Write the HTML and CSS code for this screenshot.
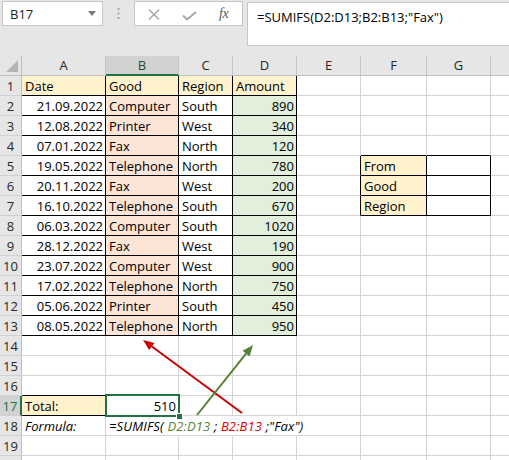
FILE: index.html
```html
<!DOCTYPE html>
<html>
<head>
<meta charset="utf-8">
<link rel="stylesheet" href="styles.css">
</head>
<body>
<div class="app">
  <div class="toolbar">
    <div class="namebox">
      <span class="nb-text">B17</span>
      <svg class="nb-arrow" width="8" height="5" viewBox="0 0 8 5"><polygon points="0,0 8,0 4,5" fill="#7a7a7a"/></svg>
    </div>
    <div class="sep">
      <svg width="3" height="12" viewBox="0 0 3 12"><rect x="0.5" y="0" width="2" height="2" fill="#a8a8a8"/><rect x="0.5" y="4.5" width="2" height="2" fill="#a8a8a8"/><rect x="0.5" y="9" width="2" height="2" fill="#a8a8a8"/></svg>
    </div>
    <div class="btns">
      <svg class="btn-x" width="12" height="11" viewBox="0 0 12 11"><path d="M1 0.5 L11 10.5 M11 0.5 L1 10.5" stroke="#a6a6a6" stroke-width="1.4" fill="none"/></svg>
      <svg class="btn-ok" width="15" height="10" viewBox="0 0 15 10"><path d="M1 4.5 L5 8.5 L14 1" stroke="#a6a6a6" stroke-width="2" fill="none"/></svg>
      <span class="fx">fx</span>
    </div>
    <div class="fbar">=SUMIFS(D2:D13;B2:B13;"Fax")</div>
  </div>

  <div class="sheet">
    <div class="corner"><svg width="12" height="12" viewBox="0 0 12 12"><polygon points="12,0 12,12 0,12" fill="#b5b5b5"/></svg></div>
    <div class="h">A</div><div class="h hs">B</div><div class="h">C</div><div class="h">D</div><div class="h">E</div><div class="h">F</div><div class="h">G</div><div class="h"></div>

    <div class="rh">1</div><div class="c b y">Date</div><div class="c b y">Good</div><div class="c b y">Region</div><div class="c b y">Amount</div><div class="c"></div><div class="c"></div><div class="c"></div><div class="c"></div>
    <div class="rh">2</div><div class="c b n">21.09.2022</div><div class="c b o">Computer</div><div class="c b">South</div><div class="c b g n">890</div><div class="c"></div><div class="c"></div><div class="c"></div><div class="c"></div>
    <div class="rh">3</div><div class="c b n">12.08.2022</div><div class="c b o">Printer</div><div class="c b">West</div><div class="c b g n">340</div><div class="c"></div><div class="c"></div><div class="c"></div><div class="c"></div>
    <div class="rh">4</div><div class="c b n">07.01.2022</div><div class="c b o">Fax</div><div class="c b">North</div><div class="c b g n">120</div><div class="c"></div><div class="c bb"></div><div class="c bb"></div><div class="c"></div>
    <div class="rh">5</div><div class="c b n">19.05.2022</div><div class="c b o">Telephone</div><div class="c b">North</div><div class="c b g n">780</div><div class="c br"></div><div class="c b y">From</div><div class="c b"></div><div class="c"></div>
    <div class="rh">6</div><div class="c b n">20.11.2022</div><div class="c b o">Fax</div><div class="c b">West</div><div class="c b g n">200</div><div class="c br"></div><div class="c b y">Good</div><div class="c b"></div><div class="c"></div>
    <div class="rh">7</div><div class="c b n">16.10.2022</div><div class="c b o">Telephone</div><div class="c b">South</div><div class="c b g n">670</div><div class="c br"></div><div class="c b y">Region</div><div class="c b"></div><div class="c"></div>
    <div class="rh">8</div><div class="c b n">06.03.2022</div><div class="c b o">Computer</div><div class="c b">South</div><div class="c b g n">1020</div><div class="c"></div><div class="c"></div><div class="c"></div><div class="c"></div>
    <div class="rh">9</div><div class="c b n">28.12.2022</div><div class="c b o">Fax</div><div class="c b">West</div><div class="c b g n">190</div><div class="c"></div><div class="c"></div><div class="c"></div><div class="c"></div>
    <div class="rh">10</div><div class="c b n">23.07.2022</div><div class="c b o">Computer</div><div class="c b">West</div><div class="c b g n">900</div><div class="c"></div><div class="c"></div><div class="c"></div><div class="c"></div>
    <div class="rh">11</div><div class="c b n">17.02.2022</div><div class="c b o">Telephone</div><div class="c b">North</div><div class="c b g n">750</div><div class="c"></div><div class="c"></div><div class="c"></div><div class="c"></div>
    <div class="rh">12</div><div class="c b n">05.06.2022</div><div class="c b o">Printer</div><div class="c b">South</div><div class="c b g n">450</div><div class="c"></div><div class="c"></div><div class="c"></div><div class="c"></div>
    <div class="rh">13</div><div class="c b n">08.05.2022</div><div class="c b o">Telephone</div><div class="c b">North</div><div class="c b g n">950</div><div class="c"></div><div class="c"></div><div class="c"></div><div class="c"></div>
    <div class="rh">14</div><div class="c"></div><div class="c"></div><div class="c"></div><div class="c"></div><div class="c"></div><div class="c"></div><div class="c"></div><div class="c"></div>
    <div class="rh">15</div><div class="c"></div><div class="c"></div><div class="c"></div><div class="c"></div><div class="c"></div><div class="c"></div><div class="c"></div><div class="c"></div>
    <div class="rh">16</div><div class="c bb"></div><div class="c bb"></div><div class="c"></div><div class="c"></div><div class="c"></div><div class="c"></div><div class="c"></div><div class="c"></div>
    <div class="rh rhs">17</div><div class="c b y">Total:</div><div class="c b n sel">510</div><div class="c"></div><div class="c"></div><div class="c"></div><div class="c"></div><div class="c"></div><div class="c"></div>
    <div class="rh">18</div><div class="c i">Formula:</div><div class="c i nr ov">=SUMIFS( <span class="ref-g">D2:D13</span> ; <span class="ref-r">B2:B13</span> ;"Fax")</div><div class="c nr"></div><div class="c nr"></div><div class="c"></div><div class="c"></div><div class="c"></div><div class="c"></div>
    <div class="rh">19</div><div class="c"></div><div class="c"></div><div class="c"></div><div class="c"></div><div class="c"></div><div class="c"></div><div class="c"></div><div class="c"></div>
    <div class="rh"></div><div class="c"></div><div class="c"></div><div class="c"></div><div class="c"></div><div class="c"></div><div class="c"></div><div class="c"></div><div class="c"></div>
  </div>

  <svg class="arrows" width="509" height="460" viewBox="0 0 509 460">
    <line x1="242" y1="413" x2="151.9" y2="346.5" stroke="#c80000" stroke-width="2"/>
    <polygon points="143,340 154.5,342.9 149.2,350.1" fill="#c80000"/>
    <line x1="197" y1="415" x2="246.1" y2="353.6" stroke="#548235" stroke-width="2"/>
    <polygon points="253,345 249.6,356.4 242.6,350.8" fill="#548235"/>
  </svg>
</div>
</body>
</html>
```

FILE: styles.css
```css
html, body {
  margin: 0;
  padding: 0;
  background: #ffffff;
}
body {
  width: 509px;
  height: 460px;
  overflow: hidden;
  font-family: "Open Sans", "Liberation Sans", sans-serif;
  font-size: 13px;
  color: #000;
}
.app {
  position: relative;
  width: 509px;
  height: 460px;
  overflow: hidden;
}

/* ---------- toolbar ---------- */
.toolbar {
  height: 56px;
  box-sizing: border-box;
  background: #e6e6e6;
  display: flex;
  align-items: flex-start;
  padding: 1px 0 0 2px;
}
.namebox {
  width: 101px;
  height: 25px;
  box-sizing: border-box;
  background: #fff;
  border: 1px solid #c6c6c6;
  display: flex;
  align-items: center;
  justify-content: space-between;
  padding: 0 6px 0 7px;
}
.nb-text {
  font-size: 13px;
  color: #222;
}
.nb-arrow {
  display: block;
}
.sep {
  width: 31px;
  height: 25px;
  display: flex;
  align-items: center;
  justify-content: center;
}
.sep svg { display: block; margin-top: 1px; }
.btns {
  width: 109px;
  height: 25px;
  box-sizing: border-box;
  background: #fff;
  border: 1px solid #c6c6c6;
  display: flex;
  align-items: center;
  padding: 0 0 0 13px;
}
.btns svg { display: block; }
.btn-x { margin-right: 22px; margin-top: 2px; }
.btn-ok { margin-right: 22px; margin-top: 4px; }
.fx {
  font-family: "Liberation Serif", serif;
  font-style: italic;
  font-size: 14px;
  color: #555;
  letter-spacing: -0.5px;
}
.fbar {
  margin-left: 4px;
  margin-top: 1px;
  flex: 1;
  height: 44px;
  box-sizing: border-box;
  background: #fff;
  border: 1px solid #c6c6c6;
  border-right: none;
  padding: 5px 0 0 9px;
  font-size: 13px;
  line-height: 18px;
  color: #000;
  white-space: nowrap;
}

/* ---------- sheet ---------- */
.sheet {
  display: grid;
  grid-template-columns: 22px 84px 73px 54px 64px 64px 66px 64px 40px;
  grid-auto-rows: 20px;
}
.sheet > div {
  box-sizing: border-box;
  white-space: nowrap;
}
.corner {
  background: #e6e6e6;
  border-right: 1px solid #bfbfbf;
  border-bottom: 1px solid #bfbfbf;
  display: flex;
  align-items: flex-end;
  justify-content: flex-end;
  padding: 0 3px 3px 0;
}
.corner svg { display: block; }
.h {
  background: #e6e6e6;
  border-right: 1px solid #c4c4c4;
  border-bottom: 1px solid #bfbfbf;
  text-align: center;
  line-height: 19px;
  color: #262626;
}
.hs {
  background: #d2d2d2;
  border-bottom: 2px solid #217346;
  color: #1d4f33;
}
.rh {
  background: #e6e6e6;
  border-right: 1px solid #bfbfbf;
  border-bottom: 1px solid #d0d0d0;
  text-align: center;
  line-height: 20px;
  color: #262626;
}
.rhs {
  background: #d2d2d2;
  border-right: 2px solid #217346;
  color: #217346;
}
.c {
  border-right: 1px solid #d4d4d4;
  border-bottom: 1px solid #d4d4d4;
  padding: 0 3px;
  line-height: 20px;
  overflow: visible;
}
.b {
  border-right-color: #000;
  border-bottom-color: #000;
}
.bb { border-bottom-color: #000; }
.br { border-right-color: #000; }
.nr { border-right-color: transparent; }
.y { background: #fff2cc; }
.o { background: #fce4d6; }
.g { background: #e2efda; }
.n { text-align: right; padding-right: 2px; }
.i { font-style: italic; }
.ov { letter-spacing: 0.15px; }
.ref-g { color: #548235; }
.ref-r { color: #e00000; }

.sel {
  position: relative;
  z-index: 2;
}
.sel::before {
  content: "";
  position: absolute;
  left: -1px;
  top: -2px;
  right: -2px;
  bottom: -2px;
  border: 2px solid #217346;
}
.sel::after {
  content: "";
  position: absolute;
  right: -5px;
  bottom: -5px;
  width: 5px;
  height: 5px;
  background: #217346;
  border: 1px solid #fff;
}

/* ---------- overlay arrows ---------- */
.arrows {
  position: absolute;
  left: 0;
  top: 0;
  pointer-events: none;
  z-index: 5;
}
```
